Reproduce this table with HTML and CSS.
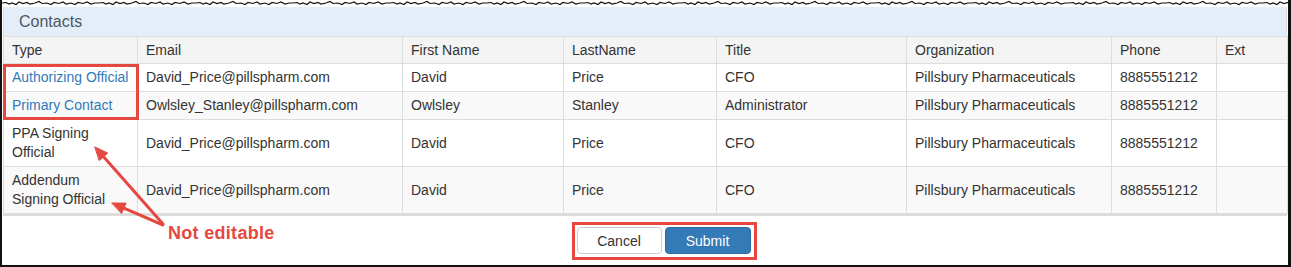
FILE: index.html
```html
<!DOCTYPE html>
<html lang="en">

<head>
    <meta charset="UTF-8">
    <meta name="viewport" content="width=device-width, initial-scale=1.0">
    <title>Contacts</title>
    <link rel="stylesheet" href="styles.css">
</head>

<body>
    <div class="frame">
        <!-- ragged top edge of the clipping -->
        <svg class="torn" width="1286" height="7" viewBox="0 0 1286 7">
            <defs>
                <pattern id="rag" width="97" height="7" patternUnits="userSpaceOnUse">
                    <path d="M0 3 L4 2.5 L7 4 L10 3 L14 4.5 L17 2 L21 3.5 L25 2.5 L28 4 L33 3 L37 1.5 L40 3.5 L45 3 L49 4.5 L52 2.5 L57 3.5 L61 2 L64 4 L69 3 L73 4.5 L76 2.5 L81 3.5 L85 2 L89 4 L93 3 L97 3"
                        fill="none" stroke="#111" stroke-width="1.2" />
                </pattern>
            </defs>
            <rect x="0" y="0" width="1286" height="7" fill="url(#rag)" />
        </svg>

        <div class="panel">
            <div class="panel-heading">Contacts</div>

            <div class="table-wrap">
                <table class="contacts">
                    <colgroup>
                        <col style="width: 134px;">
                        <col style="width: 265px;">
                        <col style="width: 161px;">
                        <col style="width: 153px;">
                        <col style="width: 190px;">
                        <col style="width: 205px;">
                        <col style="width: 105px;">
                        <col style="width: 71px;">
                    </colgroup>
                    <thead>
                        <tr>
                            <th>Type</th>
                            <th>Email</th>
                            <th>First Name</th>
                            <th>LastName</th>
                            <th>Title</th>
                            <th>Organization</th>
                            <th>Phone</th>
                            <th>Ext</th>
                        </tr>
                    </thead>
                    <tbody>
                        <tr>
                            <td><a href="#">Authorizing Official</a></td>
                            <td>David_Price@pillspharm.com</td>
                            <td>David</td>
                            <td>Price</td>
                            <td>CFO</td>
                            <td>Pillsbury Pharmaceuticals</td>
                            <td>8885551212</td>
                            <td></td>
                        </tr>
                        <tr>
                            <td><a href="#">Primary Contact</a></td>
                            <td>Owlsley_Stanley@pillspharm.com</td>
                            <td>Owlsley</td>
                            <td>Stanley</td>
                            <td>Administrator</td>
                            <td>Pillsbury Pharmaceuticals</td>
                            <td>8885551212</td>
                            <td></td>
                        </tr>
                        <tr>
                            <td>PPA Signing Official</td>
                            <td>David_Price@pillspharm.com</td>
                            <td>David</td>
                            <td>Price</td>
                            <td>CFO</td>
                            <td>Pillsbury Pharmaceuticals</td>
                            <td>8885551212</td>
                            <td></td>
                        </tr>
                        <tr>
                            <td>Addendum Signing Official</td>
                            <td>David_Price@pillspharm.com</td>
                            <td>David</td>
                            <td>Price</td>
                            <td>CFO</td>
                            <td>Pillsbury Pharmaceuticals</td>
                            <td>8885551212</td>
                            <td></td>
                        </tr>
                    </tbody>
                </table>
                <div class="callout-box"></div>
            </div>

            <div class="panel-footer">
                <div class="actions">
                    <button class="btn btn-default">Cancel</button>
                    <button class="btn btn-primary">Submit</button>
                </div>
            </div>
        </div>

        <!-- arrows pointing at the read-only types -->
        <svg class="arrows" width="1291" height="267" viewBox="0 0 1291 267">
            <g stroke="#e5483f" stroke-width="3" stroke-linecap="round" fill="#e5483f">
                <line x1="163" y1="224" x2="103.6" y2="156.8" />
                <polygon points="95,147 107.7,153.1 99.5,160.4" stroke-width="1" />
                <line x1="163" y1="225" x2="123.9" y2="208.2" />
                <polygon points="112,203 126.1,203.1 121.7,213.2" stroke-width="1" />
            </g>
        </svg>
        <div class="note">Not editable</div>
    </div>
</body>

</html>
```

FILE: styles.css
```css
* {
    margin: 0px;
    padding: 0px;
    box-sizing: border-box;
}

body {
    background-color: #fff;
    font-family: "Liberation Sans", Arial, sans-serif;
    font-size: 14px;
    color: #333;
}

.frame {
    position: relative;
    width: 1291px;
    height: 267px;
    border-left: 2px solid #111;
    border-right: 3px solid #111;
    border-bottom: 2px solid #111;
    padding: 0 1px;
    overflow: hidden;
    background-color: #fff;
}

.torn {
    display: block;
    margin-left: -1px;
}

.panel {
    width: 1284px;
}

.panel-heading {
    height: 29px;
    padding-left: 15px;
    background-color: #e4eef9;
    border-left: 1px solid #d6dde5;
    border-right: 1px solid #d6dde5;
    color: #4e5660;
    font-size: 16px;
    line-height: 29px;
}

.table-wrap {
    position: relative;
    border-bottom: 2px solid #dcdcdc;
}

.contacts {
    width: 1284px;
    table-layout: fixed;
    border-collapse: collapse;
}

.contacts th,
.contacts td {
    border: 1px solid #ddd;
    padding: 4px 8px;
    text-align: left;
    vertical-align: middle;
}

.contacts th {
    font-weight: normal;
    line-height: 18px;
    background-color: #f4f4f4;
}

.contacts td {
    line-height: 19px;
}

.contacts tbody tr:nth-child(even) {
    background-color: #f9f9f9;
}

.contacts a {
    color: #337ab7;
    text-decoration: none;
}

.callout-box {
    position: absolute;
    left: 0;
    top: 28px;
    width: 136px;
    height: 56px;
    border: 3px solid #e5483f;
}

.panel-footer {
    display: flex;
    justify-content: center;
    padding: 6px 0 0 38px;
}

.actions {
    display: flex;
    gap: 3px;
    padding: 2px 3px 3px 2px;
    border: 3px solid #e5483f;
}

.btn {
    height: 27px;
    border-radius: 4px;
    font-family: "Liberation Sans", Arial, sans-serif;
    font-size: 14px;
    cursor: pointer;
}

.btn-default {
    width: 85px;
    background-color: #fff;
    border: 1px solid #ccc;
    color: #333;
}

.btn-primary {
    width: 86px;
    background-color: #337ab7;
    border: 1px solid #2e6da4;
    color: #fff;
}

.arrows {
    position: absolute;
    left: -2px;
    top: 0;
    pointer-events: none;
}

.note {
    position: absolute;
    left: 166px;
    top: 224px;
    color: #e5483f;
    font-size: 18px;
    font-weight: bold;
    line-height: 18px;
    letter-spacing: 0.3px;
}
```
